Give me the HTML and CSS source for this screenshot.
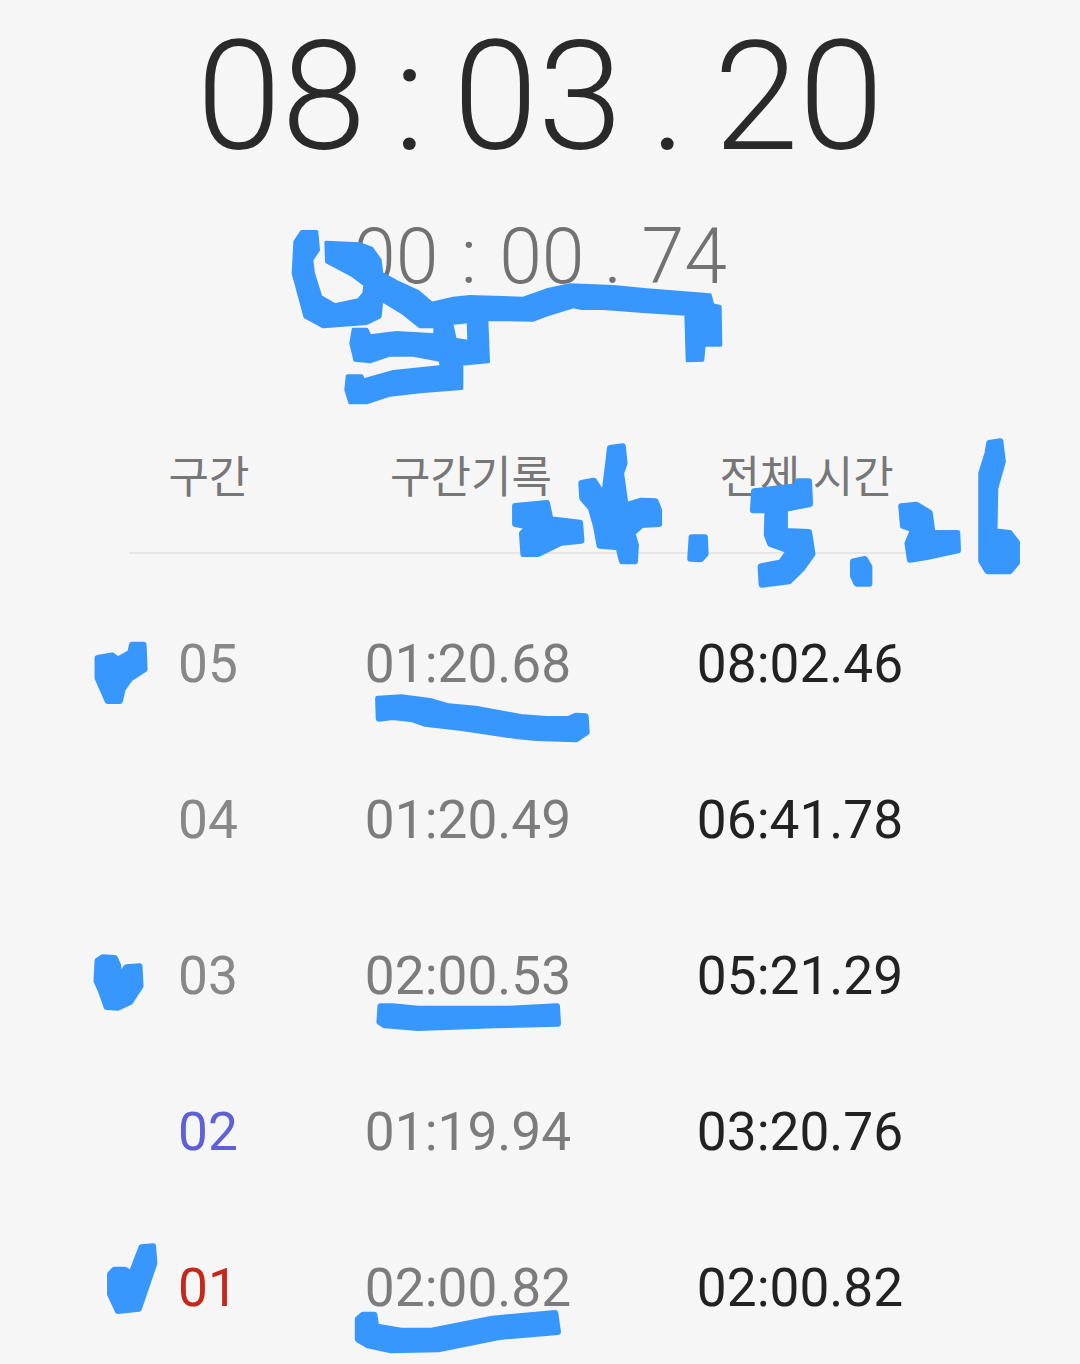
FILE: index.html
```html
<!DOCTYPE html>
<html lang="ko">
<head>
<meta charset="utf-8">
<title>스톱워치</title>
<link rel="stylesheet" href="styles.css">
</head>
<body>
<main class="screen">
  <div class="timer-main">08 : 03 . 20</div>
  <div class="timer-lap">00 : 00<span class="tight"> . 74</span></div>
  <div class="lap-head">
    <div>구간</div>
    <div>구간기록</div>
    <div>전체 시간</div>
  </div>
  <div class="lap-list">
    <div class="lap-row"><span class="lap-no">05</span><span class="lap-time">01:20.68</span><span class="lap-total">08:02.46</span></div>
    <div class="lap-row"><span class="lap-no">04</span><span class="lap-time">01:20.49</span><span class="lap-total">06:41.78</span></div>
    <div class="lap-row"><span class="lap-no">03</span><span class="lap-time">02:00.53</span><span class="lap-total">05:21.29</span></div>
    <div class="lap-row"><span class="lap-no fastest">02</span><span class="lap-time">01:19.94</span><span class="lap-total">03:20.76</span></div>
    <div class="lap-row"><span class="lap-no slowest">01</span><span class="lap-time">02:00.82</span><span class="lap-total">02:00.82</span></div>
  </div>
  <svg class="ink" viewBox="0 0 1080 1364" aria-hidden="true">
    <g transform="translate(280 210) scale(.33333)" class="blob thin">
      <path fill-rule="evenodd" d="M65,65 L110,65 L115,120 L95,150 L100,190 L122,260 L165,285 L235,270 L252,250 L255,225 L215,195 L140,155 L138,97 L240,102 L275,115 L300,150 L305,190 L350,215 L415,245 L455,280 L520,265 L570,260 L730,265 L800,240 L870,225 L1000,230 L1100,240 L1290,255 L1298,285 L1320,290 L1322,405 L1272,405 L1268,450 L1222,452 L1218,312 L1100,305 L970,295 L905,295 L880,290 L800,315 L760,330 L620,328 L625,455 L545,462 L545,535 L420,545 L330,555 L260,578 L210,578 L198,540 L202,498 L245,498 L250,510 L340,485 L485,470 L480,450 L400,435 L330,435 L270,455 L225,450 L213,400 L220,358 L260,358 L270,378 L350,368 L465,375 L465,350 L420,350 L370,310 L305,270 L300,320 L260,340 L130,350 L75,320 L40,190 L45,95 Z M515,340 L565,335 L567,395 L525,388 Z"/>
    </g>
    <g transform="translate(500 430) scale(.3448 .33333)" class="blob">
      <polygon points="44,228 136,219 146,268 232,278 236,332 178,338 110,372 68,372 64,310 84,290 44,282"/>
      <polygon points="319,54 356,49 361,100 351,130 364,226 410,212 451,214 461,240 461,282 410,285 384,310 394,345 391,394 354,394 344,352 289,347 279,290 264,235 239,205 236,159 272,152 302,200 314,100"/>
      <polygon points="556,322 594,322 596,372 582,388 552,386"/>
      <polygon points="737,184 859,169 864,154 896,154 899,222 826,237 826,303 896,306 906,372 876,416 838,454 759,464 756,409 815,397 839,362 784,342 774,315 776,241 734,241"/>
      <polygon points="1024,394 1058,387 1071,410 1071,461 1034,461 1024,438"/>
      <polygon points="1164,229 1208,224 1246,248 1254,309 1326,309 1328,361 1238,381 1189,389 1182,340 1199,298 1169,288"/>
      <polygon points="1419,39 1451,34 1458,95 1436,175 1434,304 1478,309 1499,337 1499,398 1478,424 1414,424 1396,393 1396,130 1414,70"/>
    </g>
    <g transform="translate(80 620) scale(.338 .33333)" class="blob">
      <polygon points="52,114 95,106 112,119 149,98 154,74 188,74 191,148 148,176 126,208 118,243 82,243 52,174"/>
      <polygon points="882,236 950,232 1040,244 1090,259 1170,266 1310,292 1380,297 1445,297 1467,287 1496,289 1499,337 1468,358 1350,354 1290,348 1130,324 1020,311 985,298 925,291 884,296"/>
    </g>
    <g transform="translate(80 930) scale(.338 .33333)" class="blob">
      <polygon points="52,92 67,82 103,84 113,107 116,146 137,112 176,109 179,168 148,216 113,233 79,231 64,188 49,153"/>
      <polygon points="889,229 925,229 1000,236 1270,236 1411,229 1414,281 1230,286 1000,294 902,286 886,276"/>
    </g>
    <g transform="translate(80 1230) scale(.338 .33333)" class="blob">
      <polygon points="89,132 102,119 133,119 152,131 182,52 216,49 220,100 174,236 112,243 89,193"/>
      <polygon points="822,267 837,254 871,254 876,289 950,302 1040,302 1220,266 1406,249 1414,306 1240,321 1060,358 920,361 852,346 822,328"/>
    </g>
  </svg>
</main>
</body>
</html>
```
FILE: styles.css
```css
* { box-sizing: border-box; }
html, body { margin: 0; padding: 0; }
body { background: #f6f6f7; font-family: Roboto, "Noto Sans CJK KR", sans-serif; }
.screen { position: relative; width: 1080px; height: 1364px; overflow: hidden; padding-top: 12px; }
.timer-main {
  font-weight: 300; font-size: 153px; line-height: 170px; color: #2a2a2a;
  text-align: center; white-space: pre; word-spacing: -10px;
}
.timer-lap {
  margin-top: 35px; font-weight: 300; font-size: 77px; line-height: 80px; color: #727272;
  text-align: center; white-space: pre; word-spacing: 3.5px;
}
.tight { word-spacing: 0.5px; }
.lap-head {
  display: grid; grid-template-columns: 160px 364px 298px;
  margin: 148px 0 0 129px; width: 822px; height: 109px;
  border-bottom: 2px solid #e6e6e6;
  font-family: "Noto Sans CJK KR", sans-serif; font-size: 44px; line-height: 58px;
  color: #777; text-align: center;
}
.lap-head > div:last-child { padding-left: 7px; margin-right: -2px; }
.lap-list { margin-top: 71px; }
.lap-row {
  display: grid; grid-template-columns: 160px 360px 304px;
  margin-left: 128px; width: 824px; height: 156px;
  font-size: 53.2px; text-align: center; align-items: start;
}
.lap-row > span { display: block; height: 78px; line-height: 78px; }
.lap-no { color: #888; }
.lap-time { color: #7c7c7c; }
.lap-total { color: #222; }
.fastest { color: #5f5fd8; }
.slowest { color: #c4281c; }
.ink { position: absolute; left: 0; top: 0; width: 1080px; height: 1364px; }
.blob { fill: #3797fc; stroke: #3797fc; stroke-width: 18; stroke-linejoin: round; }
.thin { stroke-width: 10; }
```
